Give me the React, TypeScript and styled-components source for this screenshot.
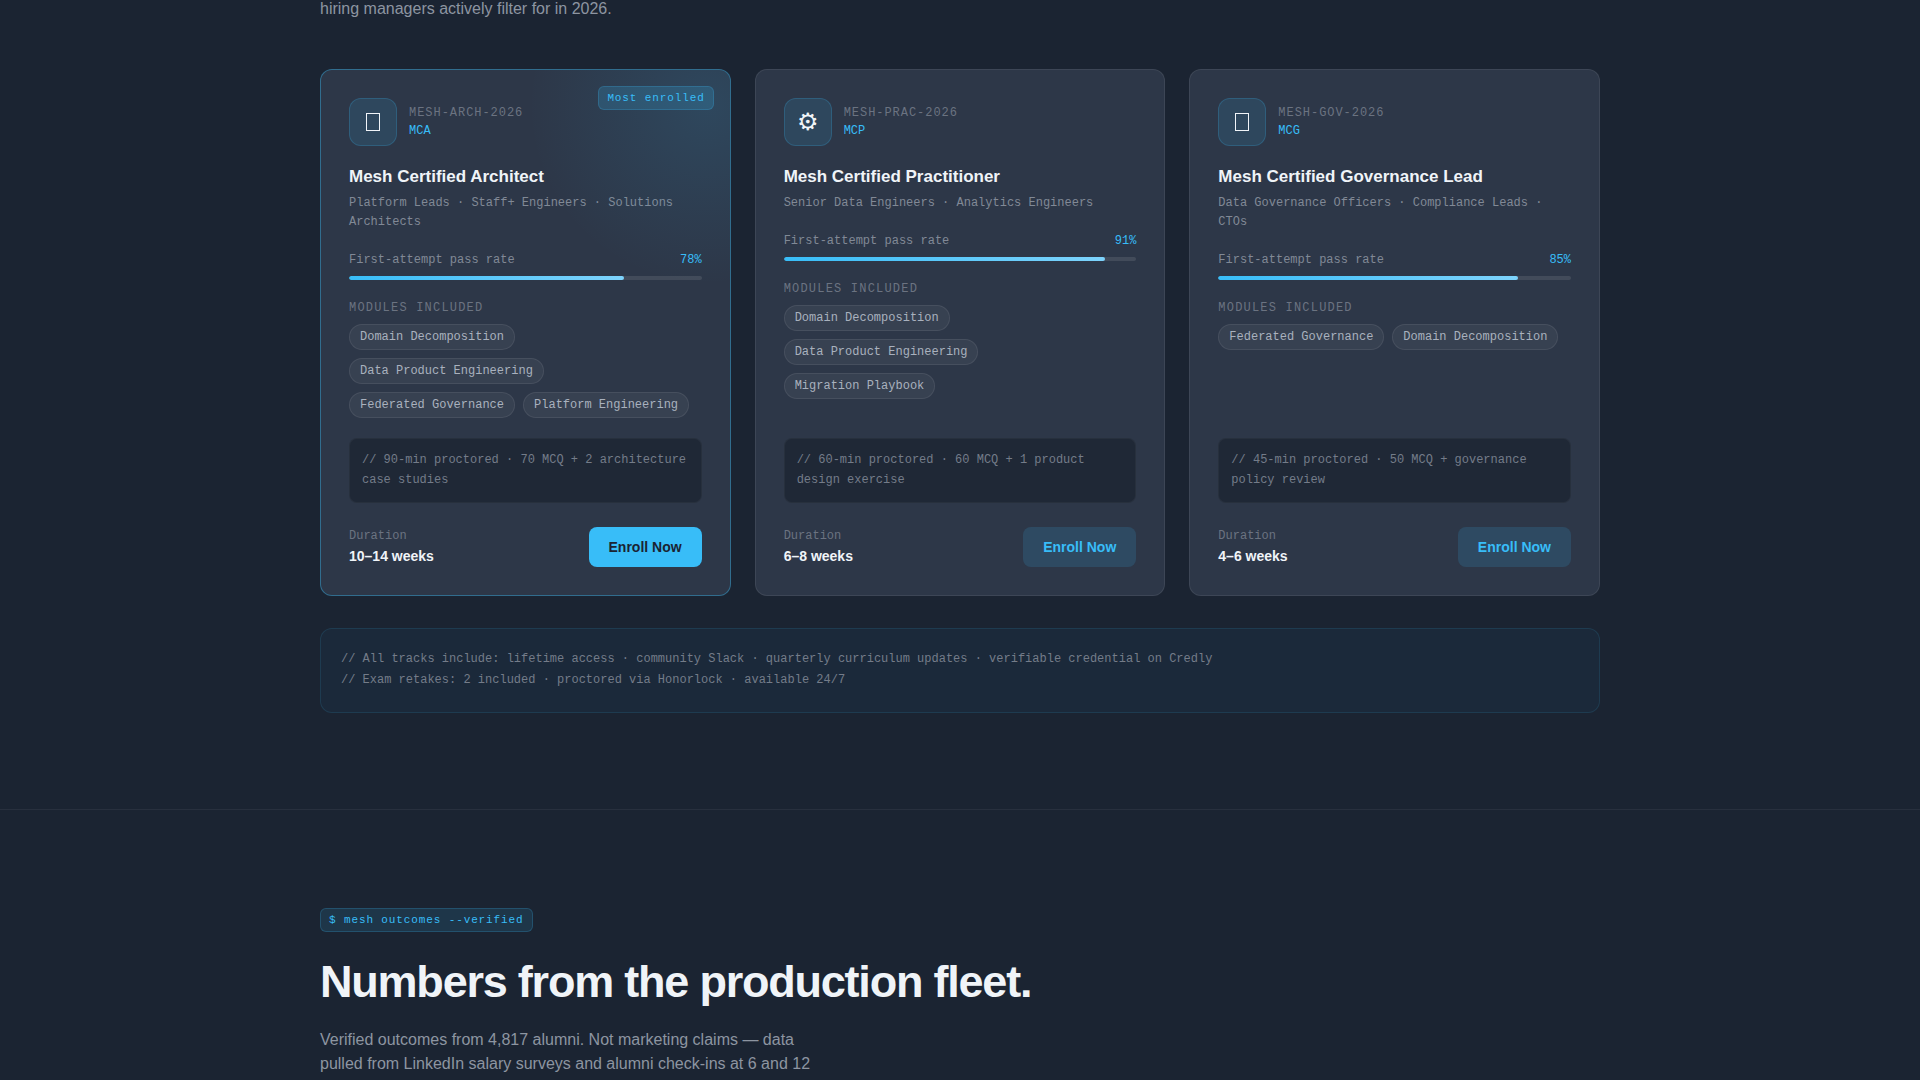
import React from "react";
import styled, { createGlobalStyle, css } from "styled-components";

const sans = `"Liberation Sans", Arial, sans-serif`;
const mono = `"Liberation Mono", "Courier New", monospace`;

const GlobalStyle = createGlobalStyle`
  *, *::before, *::after { box-sizing: border-box; }
  body {
    margin: 0;
    background: #1b2432;
    color: #f0f4f8;
    font-family: ${sans};
  }
  h2, h3, h4, p, ul { margin: 0; padding: 0; }
`;

const Page = styled.main`
  display: flow-root;
  min-height: 100vh;
  overflow: hidden;
`;

const Section = styled.section<{ $continued?: boolean }>`
  padding: ${(p) => (p.$continued ? "0 24px 96px" : "98px 24px 0")};
  margin-top: ${(p) => (p.$continued ? "-3px" : "0")};
  border-top: ${(p) => (p.$continued ? "0" : "1px solid rgba(255, 255, 255, 0.06)")};
`;

const Container = styled.div`
  max-width: 1280px;
  margin: 0 auto;
`;

const Lead = styled.p`
  max-width: 520px;
  font-size: 16px;
  line-height: 24px;
  color: #8d95a1;
`;

const Tracks = styled.div`
  display: grid;
  grid-template-columns: repeat(3, minmax(0, 1fr));
  gap: 24px;
  margin: 48px 0 32px;
`;

const Card = styled.article<{ $featured?: boolean }>`
  position: relative;
  display: flex;
  flex-direction: column;
  padding: 28px;
  border: 1px solid rgba(255, 255, 255, 0.08);
  border-radius: 12px;
  background: #2d3748;
  overflow: hidden;
  ${(p) =>
    p.$featured &&
    css`
      border-color: rgba(56, 189, 248, 0.4);
      &::before {
        content: "";
        position: absolute;
        top: 0;
        right: 0;
        width: 220px;
        height: 220px;
        background: radial-gradient(circle 180px at 90% 16%, rgba(56, 189, 248, 0.12), transparent);
      }
    `}
`;

const tag = css`
  padding: 4px 8px;
  border: 1px solid rgba(56, 189, 248, 0.2);
  border-radius: 6px;
  background: rgba(56, 189, 248, 0.12);
  color: #38bdf8;
  font-family: ${mono};
  font-size: 11px;
  line-height: 14px;
  letter-spacing: 0.08em;
`;

const Badge = styled.span`
  ${tag}
  position: absolute;
  top: 16px;
  right: 16px;
  background: rgba(56, 189, 248, 0.18);
`;

const Command = styled.span`
  ${tag}
  display: inline-block;
  vertical-align: top;
`;

const CardHead = styled.header`
  display: flex;
  align-items: center;
  gap: 12px;
  margin-bottom: 20px;
`;

const IconBox = styled.span`
  display: grid;
  place-items: center;
  width: 48px;
  height: 48px;
  border: 1px solid rgba(56, 189, 248, 0.2);
  border-radius: 12px;
  background: rgba(56, 189, 248, 0.12);
  font-size: 24px;
  line-height: 28px;
`;

const Mono = styled.div<{ $color: string; $spacing?: string; $height?: number }>`
  color: ${(p) => p.$color};
  font-family: ${mono};
  font-size: 12px;
  line-height: ${(p) => p.$height ?? 18}px;
  letter-spacing: ${(p) => p.$spacing ?? "normal"};
`;

const Title = styled.h3`
  font-size: 17px;
  line-height: 22px;
  margin-bottom: 6px;
`;

const Audience = styled(Mono)`
  margin-bottom: 19px;
`;

const Rate = styled.div`
  display: flex;
  justify-content: space-between;
  margin-bottom: 7px;
`;

const Track = styled.div`
  height: 4px;
  margin-bottom: 19px;
  border-radius: 2px;
  background: rgba(255, 255, 255, 0.1);
  overflow: hidden;
`;

const Fill = styled.div`
  height: 100%;
  border-radius: 2px;
  background: linear-gradient(90deg, #38bdf8, #7dd3fc);
`;

const Modules = styled.div`
  flex: 1;
  margin-bottom: 20px;
`;

const Chips = styled.ul`
  display: flex;
  flex-wrap: wrap;
  gap: 8px;
  margin-top: 7px;
  list-style: none;
`;

const Chip = styled.li`
  padding: 3px 10px;
  border: 1px solid rgba(255, 255, 255, 0.08);
  border-radius: 13px;
  background: rgba(255, 255, 255, 0.05);
  color: #a9b1be;
  font-family: ${mono};
  font-size: 12px;
  line-height: 18px;
`;

const Exam = styled(Mono)`
  padding: 11px 12px 12px;
  margin-bottom: 24px;
  border: 1px solid rgba(255, 255, 255, 0.04);
  border-radius: 8px;
  background: #1f2836;
`;

const CardFoot = styled.footer`
  display: flex;
  align-items: center;
  justify-content: space-between;
`;

const Weeks = styled.div`
  font-size: 14px;
  font-weight: 700;
  line-height: 22px;
`;

const Enroll = styled.button<{ $primary?: boolean }>`
  height: 40px;
  padding: 0 20px;
  border: 0;
  border-radius: 8px;
  background: ${(p) => (p.$primary ? "#38bdf8" : "rgba(56, 189, 248, 0.15)")};
  color: ${(p) => (p.$primary ? "#1b2432" : "#38bdf8")};
  font: 700 14px ${sans};
  cursor: pointer;
`;

const Notes = styled.aside`
  padding: 20px 20px 21px;
  border: 1px solid rgba(56, 189, 248, 0.12);
  border-radius: 12px;
  background: rgba(56, 189, 248, 0.04);
`;

const Heading = styled.h2`
  margin: 24px 0 20px;
  font-size: 45px;
  line-height: 52px;
  letter-spacing: -0.027em;
`;

const muted = "#818996";
const note = "#747c89";
const faint = "#6b7381";
const accent = "#38bdf8";

const FrameIcon = () => (
  <svg width="14" height="18" viewBox="0 0 14 18" fill="none" stroke="currentColor" shapeRendering="crispEdges">
    <rect x="0.5" y="0.5" width="13" height="17" />
  </svg>
);

const tracks = [
  {
    icon: <FrameIcon />,
    code: "MESH-ARCH-2026",
    short: "MCA",
    title: "Mesh Certified Architect",
    audience: "Platform Leads · Staff+ Engineers · Solutions Architects",
    rate: 78,
    modules: ["Domain Decomposition", "Data Product Engineering", "Federated Governance", "Platform Engineering"],
    exam: "90-min proctored · 70 MCQ + 2 architecture case studies",
    duration: "10–14 weeks",
    featured: true,
  },
  {
    icon: "⚙",
    code: "MESH-PRAC-2026",
    short: "MCP",
    title: "Mesh Certified Practitioner",
    audience: "Senior Data Engineers · Analytics Engineers",
    rate: 91,
    modules: ["Domain Decomposition", "Data Product Engineering", "Migration Playbook"],
    exam: "60-min proctored · 60 MCQ + 1 product design exercise",
    duration: "6–8 weeks",
  },
  {
    icon: <FrameIcon />,
    code: "MESH-GOV-2026",
    short: "MCG",
    title: "Mesh Certified Governance Lead",
    audience: "Data Governance Officers · Compliance Leads · CTOs",
    rate: 85,
    modules: ["Federated Governance", "Domain Decomposition"],
    exam: "45-min proctored · 50 MCQ + governance policy review",
    duration: "4–6 weeks",
  },
];

export default function App() {
  return (
    <Page>
      <GlobalStyle />
      <Section $continued>
        <Container>
          <Lead>hiring managers actively filter for in 2026.</Lead>
          <Tracks>
            {tracks.map((t) => (
              <Card key={t.code} $featured={t.featured}>
                {t.featured && <Badge>Most enrolled</Badge>}
                <CardHead>
                  <IconBox aria-hidden="true">{t.icon}</IconBox>
                  <div>
                    <Mono $color={faint} $spacing="0.08em">{t.code}</Mono>
                    <Mono $color={accent}>{t.short}</Mono>
                  </div>
                </CardHead>
                <Title>{t.title}</Title>
                <Audience $color={muted} $height={19}>{t.audience}</Audience>
                <Rate>
                  <Mono $color={muted}>First-attempt pass rate</Mono>
                  <Mono $color={accent}>{t.rate}%</Mono>
                </Rate>
                <Track>
                  <Fill style={{ width: `${t.rate}%` }} />
                </Track>
                <Modules>
                  <Mono $color={faint} $spacing="0.1em">MODULES INCLUDED</Mono>
                  <Chips>
                    {t.modules.map((m) => (
                      <Chip key={m}>{m}</Chip>
                    ))}
                  </Chips>
                </Modules>
                <Exam $color={note} $height={20}>{`// ${t.exam}`}</Exam>
                <CardFoot>
                  <div>
                    <Mono $color={faint}>Duration</Mono>
                    <Weeks>{t.duration}</Weeks>
                  </div>
                  <Enroll type="button" $primary={t.featured}>Enroll Now</Enroll>
                </CardFoot>
              </Card>
            ))}
          </Tracks>
          <Notes>
            <Mono $color={note} $height={21}>
              {"// All tracks include: lifetime access · community Slack · quarterly curriculum updates · verifiable credential on Credly"}
            </Mono>
            <Mono $color={note} $height={21}>
              {"// Exam retakes: 2 included · proctored via Honorlock · available 24/7"}
            </Mono>
          </Notes>
        </Container>
      </Section>
      <Section>
        <Container>
          <Command>$ mesh outcomes --verified</Command>
          <Heading>Numbers from the production fleet.</Heading>
          <Lead>
            Verified outcomes from 4,817 alumni. Not marketing claims — data pulled from LinkedIn salary surveys and alumni check-ins at 6 and 12
          </Lead>
        </Container>
      </Section>
    </Page>
  );
}
